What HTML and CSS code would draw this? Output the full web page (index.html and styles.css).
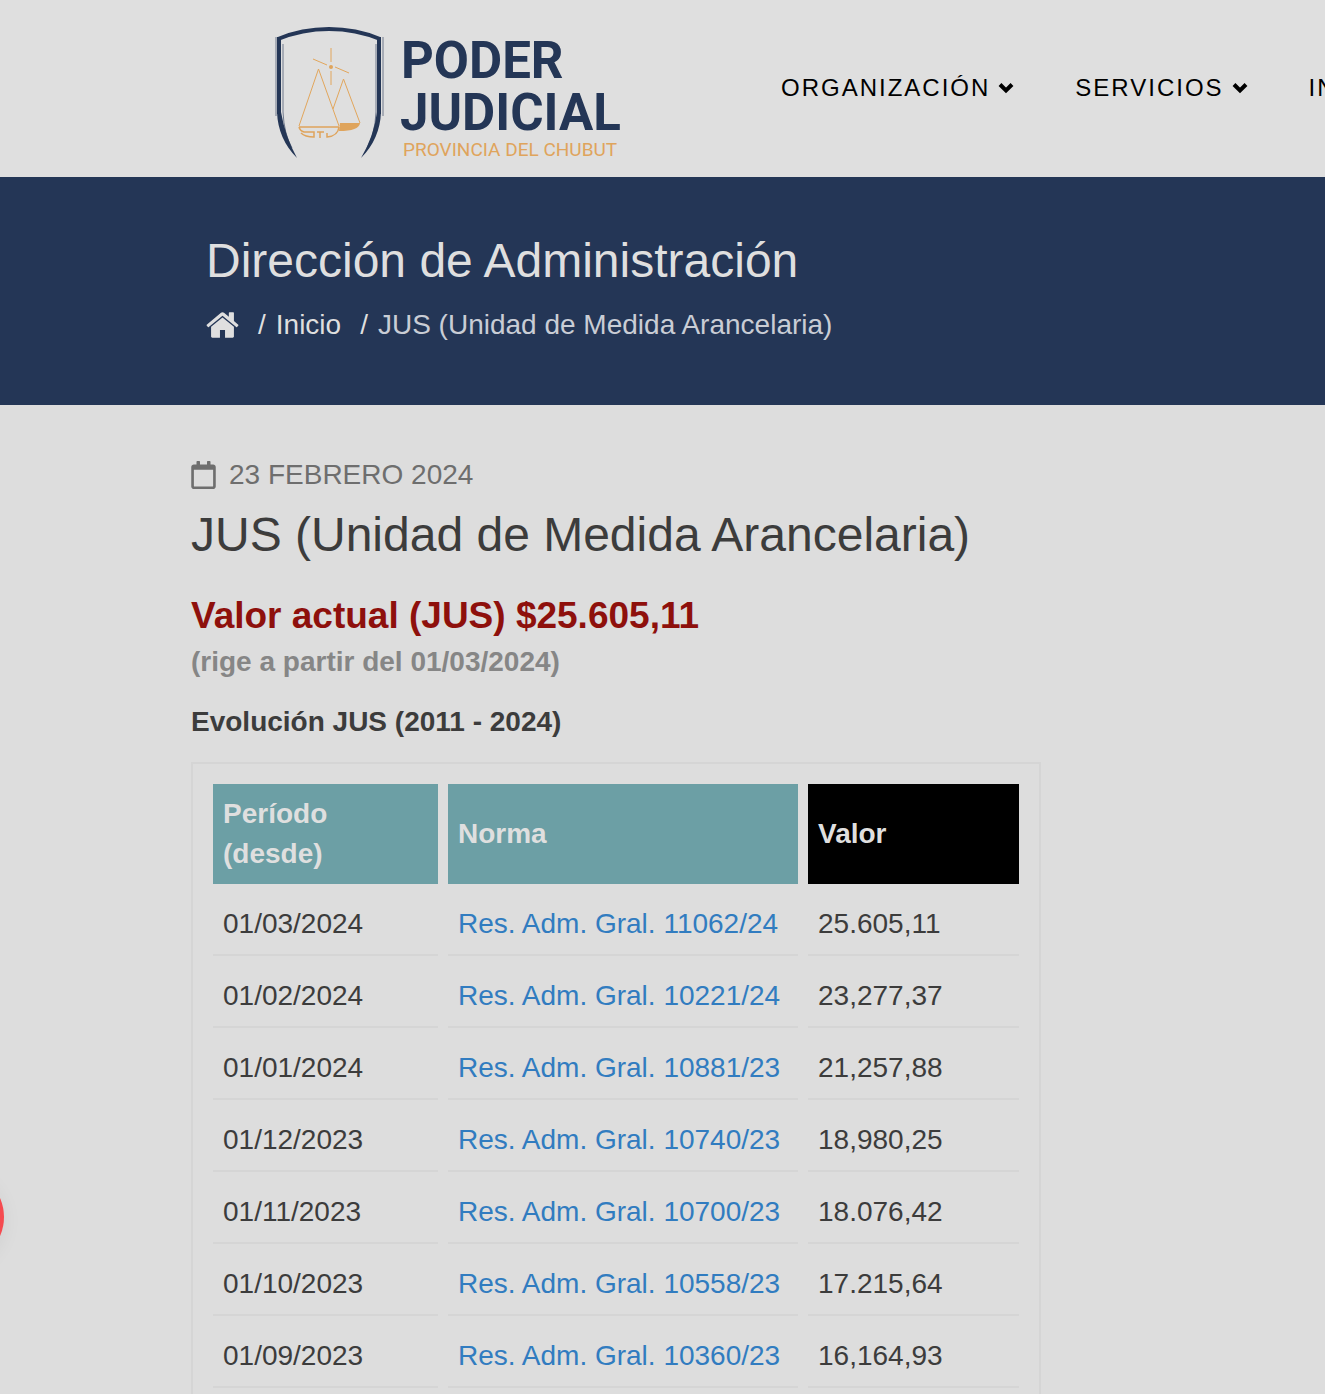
FILE: index.html
```html
<!DOCTYPE html>
<html lang="es">
<head>
<meta charset="utf-8">
<meta name="viewport" content="width=device-width, initial-scale=1">
<title>JUS (Unidad de Medida Arancelaria)</title>
<link rel="stylesheet" href="styles.css">
</head>
<body>
<header class="site-header">
  <a class="logo" href="#" aria-label="Poder Judicial, Provincia del Chubut">
    <svg class="logo-art" viewBox="0 0 350 137" width="350" height="137">
      <g fill="none" stroke="#243656">
        <path stroke-width="4" d="M5 15Q29 5 56 5T107 15"/>
        <path stroke-width="4" d="M6 13V90M106 13V90"/>
        <path stroke-width="1" opacity=".6" d="M3 13V92M110 13V92"/>
        <path stroke-width="1" opacity=".6" d="M10 20V88Q11 110 19 124M103 20V88Q102 110 94 124"/>
      </g>
      <path fill="#243656" d="M4 88Q5 115 24 134Q12 112 8 88ZM108 88Q107 115 88 134Q101 112 104 88Z"/>
      <g fill="none" stroke="#e2a65c" stroke-width="1">
        <path d="M58 24V38M58 47V61M40 35L54 41M62 43L76 49"/>
        <path d="M26 102L45.500 45L66 102M60 85L70.500 55L87 99"/>
      </g>
      <g fill="none" stroke="#dfa45c" stroke-width="1.500">
        <path d="M26 103H66M26 103Q27 107 31 108H41V113Q32 113 28 109M66 103Q65 112 54 113V109M44 108H51M47 108V114"/>
      </g>
      <path fill="#dfa45c" d="M67 99H87Q86 107 66 107Z"/>
      <circle cx="58" cy="43" r="2" fill="#dfa45c"/>
      <text class="logo-name" x="128" y="54">PODER</text>
      <text class="logo-name" x="127" y="106">JUDICIAL</text>
      <text class="logo-place" x="130" y="132">PROVINCIA DEL CHUBUT</text>
    </svg>
  </a>
  <nav class="main-nav">
    <a href="#">ORGANIZACIÓN<svg class="chevron" viewBox="0 0 16 12"><path d="M2 2.500L8 8.500L14 2.500"/></svg></a>
    <a href="#">SERVICIOS<svg class="chevron" viewBox="0 0 16 12"><path d="M2 2.500L8 8.500L14 2.500"/></svg></a>
    <a href="#">INFORMACIÓN</a>
  </nav>
</header>

<section class="banner">
  <h2 class="banner-title">Dirección de Administración</h2>
  <nav class="breadcrumb" aria-label="Ruta">
    <a class="home" href="#" aria-label="Portada"><svg viewBox="0 0 1664 1792" width="33" height="36"><path fill="currentColor" d="M1408 992v480q0 26-19 45t-45 19h-384v-384h-256v384h-384q-26 0-45-19t-19-45v-480q0-1 .5-3t.5-3l575-474 575 474q1 2 1 6zm223-69l-62 74q-8 9-21 11h-3q-13 0-21-7l-692-577-692 577q-12 8-24 7-13-2-21-11l-62-74q-8-10-7-23.500t11-21.500l719-599q32-26 76-26t76 26l244 204v-195q0-14 9-23t23-9h192q14 0 23 9t9 23v408l219 182q10 8 11 21.500t-7 23.500z"/></svg></a>
    <span class="crumb"><span>/</span><a href="#">Inicio</a></span>
    <span class="crumb"><span>/</span><span class="current">JUS (Unidad de Medida Arancelaria)</span></span>
  </nav>
</section>

<main class="content">
  <p class="date"><svg viewBox="0 0 448 512" width="25" height="28"><path fill="currentColor" d="M400 64h-48V12c0-6.600-5.400-12-12-12h-40c-6.600 0-12 5.400-12 12v52H160V12c0-6.600-5.400-12-12-12h-40c-6.600 0-12 5.400-12 12v52H48C21.500 64 0 85.500 0 112v352c0 26.500 21.500 48 48 48h352c26.500 0 48-21.500 48-48V112c0-26.500-21.500-48-48-48zm-6 400H54c-3.300 0-6-2.700-6-6V160h352v298c0 3.300-2.700 6-6 6z"/></svg><time datetime="2024-02-23">23 FEBRERO 2024</time></p>
  <h1 class="page-title">JUS (Unidad de Medida Arancelaria)</h1>
  <p class="value">Valor actual (JUS) $25.605,11</p>
  <p class="since">(rige a partir del 01/03/2024)</p>
  <h3 class="history-title">Evolución JUS (2011 - 2024)</h3>
  <div class="panel">
    <table class="history">
      <colgroup><col class="col-period"><col class="col-rule"><col class="col-value"></colgroup>
      <thead>
        <tr><th scope="col">Período (desde)</th><th scope="col">Norma</th><th scope="col" class="dark">Valor</th></tr>
      </thead>
      <tbody>
        <tr><td>01/03/2024</td><td><a href="#">Res. Adm. Gral. 11062/24</a></td><td>25.605,11</td></tr>
        <tr><td>01/02/2024</td><td><a href="#">Res. Adm. Gral. 10221/24</a></td><td>23,277,37</td></tr>
        <tr><td>01/01/2024</td><td><a href="#">Res. Adm. Gral. 10881/23</a></td><td>21,257,88</td></tr>
        <tr><td>01/12/2023</td><td><a href="#">Res. Adm. Gral. 10740/23</a></td><td>18,980,25</td></tr>
        <tr><td>01/11/2023</td><td><a href="#">Res. Adm. Gral. 10700/23</a></td><td>18.076,42</td></tr>
        <tr><td>01/10/2023</td><td><a href="#">Res. Adm. Gral. 10558/23</a></td><td>17.215,64</td></tr>
        <tr><td>01/09/2023</td><td><a href="#">Res. Adm. Gral. 10360/23</a></td><td>16,164,93</td></tr>
      </tbody>
    </table>
  </div>
</main>
<button class="floating" type="button" aria-label="Accesibilidad"></button>
</body>
</html>
```
FILE: styles.css
```css
* { box-sizing: border-box; }

body {
  margin: 0;
  height: 100vh;
  overflow: hidden;
  background: #dddddd;
  color: #3c3c3c;
  font: 28px/40px "Liberation Sans", Arial, sans-serif;
}

h1, h2, h3, p { margin: 0; }
a { color: inherit; text-decoration: none; }
svg { display: block; flex: none; }

.site-header {
  display: flex;
  align-items: center;
  gap: 158px;
  height: 177px;
  padding-left: 273px;
  overflow: hidden;
  background: #dfdfdf;
}
.logo { flex: none; padding-top: 8px; }
.logo-art { overflow: visible; }
.logo-name {
  fill: #243656;
  font: bold 51px Roboto, sans-serif;
}
.logo-place {
  fill: #dfa45c;
  font: 19px Roboto, sans-serif;
}

.main-nav {
  display: flex;
  flex: none;
  gap: 61px;
  padding-bottom: 2px;
  color: #000;
  font-size: 24px;
  letter-spacing: 2px;
}
.main-nav a { display: flex; align-items: center; gap: 8px; }
.chevron {
  width: 16px;
  height: 12px;
  fill: none;
  stroke: #000;
  stroke-width: 4;
}

.banner {
  padding: 56px 0 60px 206px;
  background: #243656;
  color: #dfdfdf;
}
.banner-title { font-size: 48px; font-weight: normal; line-height: 56px; }
.breadcrumb {
  display: flex;
  align-items: center;
  gap: 19px;
  margin-top: 16px;
}
.crumb { display: flex; gap: 10px; }
.current { color: #c9cdd5; }

.content { padding: 50px 20px 20px 191px; }
.date {
  display: flex;
  align-items: center;
  gap: 13px;
  color: #6e6e6e;
}
.page-title {
  margin-top: 12px;
  font-size: 48px;
  font-weight: normal;
  line-height: 56px;
}
.value {
  margin-top: 33px;
  color: #8e100c;
  font-size: 37px;
  font-weight: bold;
}
.since { margin-top: 6px; color: #868686; font-weight: bold; }
.history-title { margin-top: 20px; font-size: 28px; }

.panel {
  max-width: 850px;
  margin-top: 20px;
  padding: 20px 10px;
  border: 2px solid #d5d5d5;
}
.history {
  width: 100%;
  table-layout: fixed;
  border-collapse: separate;
  border-spacing: 10px 0;
}
.col-period { width: 225px; }
.col-rule { width: 350px; }
.history th {
  padding: 10px;
  background: #6c9fa5;
  color: #dfdfdf;
  text-align: left;
}
.history th.dark { background: #000; }
.history td {
  padding: 20px 10px 10px;
  border-bottom: 2px solid #d5d5d5;
}
.history td a { color: #317cc0; }

.floating {
  position: fixed;
  left: -92px;
  bottom: 129px;
  width: 96px;
  height: 96px;
  padding: 0;
  border: 0;
  border-radius: 50%;
  background: #f54b50;
  box-shadow: 0 4px 20px rgba(0, 0, 0, 0.06);
}
```
